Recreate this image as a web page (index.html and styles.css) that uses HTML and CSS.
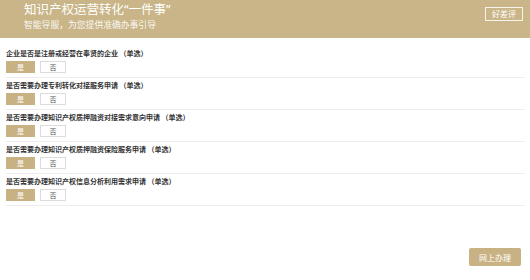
FILE: index.html
```html
<!DOCTYPE html>
<html lang="zh-CN">
<head>
<meta charset="utf-8">
<title>知识产权运营转化“一件事”</title>
<link rel="stylesheet" href="styles.css">
</head>
<body>
<div class="page">
  <header class="header">
    <div class="titles">
      <h1 class="title">知识产权运营转化“一件事”</h1>
      <p class="subtitle">智能导服，为您提供准确办事引导</p>
    </div>
    <button class="rate-btn">好差评</button>
  </header>
  <main class="questions">
    <div class="row">
      <div class="q">企业是否是注册或经营在奉贤的企业 （单选）</div>
      <div class="opts"><span class="opt on">是</span><span class="opt">否</span></div>
    </div>
    <div class="row">
      <div class="q">是否需要办理专利转化对接服务申请 （单选）</div>
      <div class="opts"><span class="opt on">是</span><span class="opt">否</span></div>
    </div>
    <div class="row">
      <div class="q">是否需要办理知识产权质押融资对接需求意向申请 （单选）</div>
      <div class="opts"><span class="opt on">是</span><span class="opt">否</span></div>
    </div>
    <div class="row">
      <div class="q">是否需要办理知识产权质押融资保险服务申请 （单选）</div>
      <div class="opts"><span class="opt on">是</span><span class="opt">否</span></div>
    </div>
    <div class="row">
      <div class="q">是否需要办理知识产权信息分析利用需求申请 （单选）</div>
      <div class="opts"><span class="opt on">是</span><span class="opt">否</span></div>
    </div>
  </main>
  <footer class="footer">
    <button class="go-btn">网上办理</button>
  </footer>
</div>
</body>
</html>
```
FILE: styles.css
```css
* { box-sizing: border-box; }
html, body { margin: 0; padding: 0; background: #fff; }
body { font-family: "Noto Sans CJK SC", "Noto Sans", sans-serif; }
.page { width: 530px; height: 280px; display: flex; flex-direction: column; }
.header {
  height: 38px;
  background: #c9b587;
  display: flex;
  justify-content: space-between;
  align-items: flex-start;
  padding: 0 7px 0 24px;
}
.titles { padding-top: 2px; }
.title {
  margin: 0;
  font-family: "Noto Sans", "Noto Sans CJK SC", sans-serif;
  font-size: 12.5px;
  line-height: 16px;
  font-weight: 400;
  color: #fff;
}
.subtitle {
  margin: 1px 0 0;
  font-size: 8.8px;
  line-height: 11px;
  color: #fff;
  opacity: 0.92;
}
.rate-btn {
  margin-top: 7px;
  width: 38px;
  height: 14px;
  padding: 0;
  background: transparent;
  border: 1px solid rgba(255,255,255,0.85);
  color: #fff;
  font-family: "Noto Sans CJK SC", sans-serif;
  font-size: 8px;
  line-height: 12px;
}
.questions { flex: 1; padding: 8px 5px 0 6px; }
.row {
  padding: 2px 0 4px;
  border-bottom: 1px solid #ededed;
}
.q {
  font-size: 7px;
  line-height: 10px;
  font-weight: 700;
  color: #333;
}
.opts { display: flex; gap: 5px; margin-top: 3px; }
.opt {
  width: 26px;
  height: 12px;
  border: 1px solid #dcdcdc;
  background: #fff;
  color: #555;
  font-size: 7px;
  line-height: 10px;
  text-align: center;
}
.opt.on { width: 29px; background: #c8b283; border-color: #c8b283; color: #fff; }
.footer { display: flex; justify-content: flex-end; padding: 0 9px 14px 0; }
.go-btn {
  width: 52px;
  height: 18px;
  padding: 0;
  border: 0;
  border-radius: 2px;
  background: #c8b283;
  color: #fff;
  font-family: "Noto Sans CJK SC", sans-serif;
  font-size: 8px;
}
```
